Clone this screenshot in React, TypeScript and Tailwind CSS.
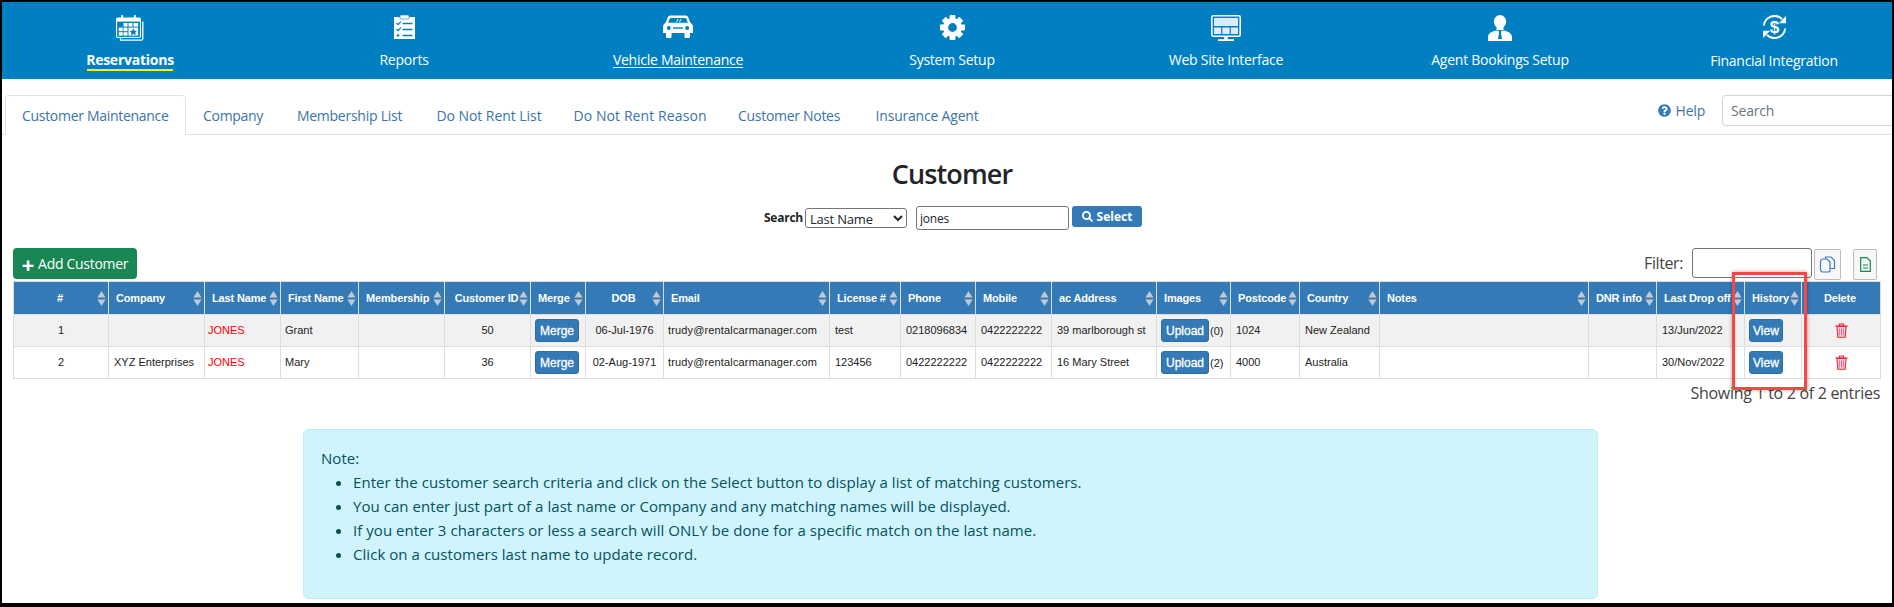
import React from "react";
import { FaSearch, FaQuestionCircle } from "react-icons/fa";

const BLUE = "#0080c3";

function CalendarIcon() {
  return (
    <svg width="28" height="26" viewBox="0 0 28 26">
      <path d="M26.8 6.5V23.5a1.6 1.6 0 0 1-1.6 1.6H4.5V23" fill="none" stroke="#fff" strokeWidth="1.3" />
      <rect x="0" y="2.5" width="25" height="20.5" rx="1.8" fill="#fff" />
      <rect x="1.1" y="6.6" width="22.8" height="15.3" fill={BLUE} />
      <g fill="#fff">
        <rect x="7.5" y="8" width="4" height="3.6" />
        <rect x="12.5" y="8" width="4" height="3.6" />
        <rect x="17.5" y="8" width="4.6" height="3.6" />
        <rect x="2.7" y="12.6" width="4" height="3.6" />
        <rect x="7.5" y="12.6" width="4" height="3.6" />
        <rect x="2.7" y="17.2" width="4" height="3.4" />
        <rect x="7.5" y="17.2" width="4" height="3.4" />
        <rect x="12.5" y="12.6" width="9.6" height="8" />
        <rect x="5" y="0" width="2.2" height="5" rx="1" />
        <rect x="17.8" y="0" width="2.2" height="5" rx="1" />
      </g>
      <path d="M17.3 13.3l1.2 2.4 2.5.3-1.8 1.8.4 2.5-2.3-1.2-2.3 1.2.4-2.5-1.8-1.8 2.5-.3z" fill={BLUE} />
    </svg>
  );
}

function ClipboardIcon() {
  return (
    <svg width="21" height="24" viewBox="0 0 21 24">
      <rect x="0" y="2" width="21" height="22" fill="#fff" />
      <rect x="6" y="0" width="9" height="4" rx="1" fill="#fff" stroke={BLUE} strokeWidth="0.6" />
      <g fill="none" stroke={BLUE} strokeWidth="1.3">
        <path d="M2.5 8l1.6 1.6 2.8-3" />
        <path d="M2.5 14l1.6 1.6 2.8-3" />
        <path d="M8.5 8.5H18.5M8.5 14.5H18.5M8.5 20.5H18.5" />
      </g>
      <circle cx="4" cy="20.5" r="1.3" fill={BLUE} />
    </svg>
  );
}

function CarIcon() {
  return (
    <svg width="30" height="23" viewBox="0 0 30 23">
      <path d="M7.5 0.5H22.5C24 .5 24.8 1.2 25.4 2.7L27.2 7.5C29 8.6 30 10 30 12V18H27V22a1 1 0 0 1-1 1H22.5a1 1 0 0 1-1-1V18H8.5V22a1 1 0 0 1-1 1H4a1 1 0 0 1-1-1V18H0V12C0 10 1 8.6 2.8 7.5L4.6 2.7C5.2 1.2 6 .5 7.5 .5Z" fill="#fff" />
      <path d="M8 3H22C22.8 3 23.2 3.4 23.5 4.1L24.8 7.8H5.2L6.5 4.1C6.8 3.4 7.2 3 8 3Z" fill={BLUE} />
      <path d="M13.5 6.8L15.2 4M16.5 6.8L18.2 4" stroke="#fff" strokeWidth="1" />
      <circle cx="5.8" cy="13" r="2" fill={BLUE} />
      <circle cx="24.2" cy="13" r="2" fill={BLUE} />
      <rect x="10" y="12.3" width="10" height="1.4" fill={BLUE} />
    </svg>
  );
}

function GearIcon() {
  const teeth = [0, 45, 90, 135, 180, 225, 270, 315];
  return (
    <svg width="25" height="25" viewBox="0 0 25 25">
      {teeth.map((a) => (
        <rect key={a} x="9.6" y="0" width="5.8" height="6" rx="0.8" fill="#fff" transform={`rotate(${a} 12.5 12.5)`} />
      ))}
      <circle cx="12.5" cy="12.5" r="6.9" fill="none" stroke="#fff" strokeWidth="5" />
    </svg>
  );
}

function MonitorIcon() {
  return (
    <svg width="30" height="26" viewBox="0 0 30 26">
      <rect x="0.8" y="0.8" width="28.4" height="20.4" rx="1.5" fill="none" stroke="#fff" strokeWidth="1.6" />
      <g fill="#dcecf6">
        <rect x="3" y="3" width="24" height="8" />
        <rect x="3" y="12.5" width="7.2" height="6.5" />
        <rect x="11.4" y="12.5" width="7.2" height="6.5" />
        <rect x="19.8" y="12.5" width="7.2" height="6.5" />
      </g>
      <rect x="13.2" y="21.5" width="3.6" height="3" fill="#fff" />
      <rect x="7" y="24.2" width="16" height="1.8" fill="#fff" />
    </svg>
  );
}

function AgentIcon() {
  return (
    <svg width="24" height="26" viewBox="0 0 24 26">
      <ellipse cx="12" cy="6.6" rx="6.2" ry="6.6" fill="#fff" />
      <path d="M8.5 11.5H15.5V15H8.5Z" fill="#fff" />
      <path d="M0 26V22C0 18.5 3.5 16.5 8 15.5L12 16L16 15.5C20.5 16.5 24 18.5 24 22V26Z" fill="#fff" />
      <path d="M10.6 15.8H13.4L13 18L14 24H10L11 18Z" fill={BLUE} />
    </svg>
  );
}

function DollarIcon() {
  return (
    <svg width="25" height="24" viewBox="0 0 25 24">
      <g fill="none" stroke="#fff" strokeWidth="2">
        <path d="M1.8 10.5A10.8 10.8 0 0 1 20 4" />
        <path d="M23.2 13.5A10.8 10.8 0 0 1 5 20" />
      </g>
      <path d="M24 1V8.2H16.8Z" fill="#fff" />
      <path d="M1 23V15.8H8.2Z" fill="#fff" />
      <text x="12.5" y="18.2" textAnchor="middle" fill="#fff" fontSize="17" fontWeight="700" fontFamily="'Liberation Sans', sans-serif">$</text>
    </svg>
  );
}

function SortArrows() {
  return (
    <svg width="9" height="15" viewBox="0 0 9 15" className="shrink-0">
      <path d="M4.5 0L8.6 6.6H0.4Z" fill="#c3c9d1" />
      <path d="M0.4 8.4H8.6L4.5 15Z" fill="#c3c9d1" />
    </svg>
  );
}

function Trash() {
  return (
    <svg width="13" height="15" viewBox="0 0 13 15" className="mx-auto">
      <path d="M2 3.5H11L10.2 14.2H2.8Z" fill="#ffd6e0" stroke="#f22" strokeWidth="1.1" />
      <path d="M0.5 3H12.5" stroke="#f22" strokeWidth="1.2" />
      <path d="M4.5 3V1H8.5V3" fill="none" stroke="#f22" strokeWidth="1.1" />
      <path d="M4.6 5.5V12.5M6.5 5.5V12.5M8.4 5.5V12.5" stroke="#f0508c" strokeWidth="0.9" />
    </svg>
  );
}

const navItems = [
  { label: "Reservations", icon: <CalendarIcon />, cls: "font-bold" },
  { label: "Reports", icon: <ClipboardIcon />, cls: "" },
  { label: "Vehicle Maintenance", icon: <CarIcon />, cls: "underline underline-offset-2" },
  { label: "System Setup", icon: <GearIcon />, cls: "" },
  { label: "Web Site Interface", icon: <MonitorIcon />, cls: "" },
  { label: "Agent Bookings Setup", icon: <AgentIcon />, cls: "" },
  { label: "Financial Integration", icon: <DollarIcon />, cls: "translate-y-px" },
];

const tabs = [
  { t: "Company", c: "w-[95px] tracking-[-0.3px]" },
  { t: "Membership List", c: "w-[138px] tracking-[-0.25px]" },
  { t: "Do Not Rent List", c: "w-[141px] tracking-[-0.05px]" },
  { t: "Do Not Rent Reason", c: "w-[161px] tracking-[0.1px]" },
  { t: "Customer Notes", c: "w-[137px] tracking-[-0.3px]" },
  { t: "Insurance Agent", c: "w-[139px] tracking-[-0.2px]" },
];

const columns = [
  { label: "#", w: "w-[95px]", center: true, sort: true },
  { label: "Company", w: "w-[96px]", center: false, sort: true },
  { label: "Last Name", w: "w-[76px]", center: false, sort: true },
  { label: "First Name", w: "w-[78px]", center: false, sort: true },
  { label: "Membership", w: "w-[86px]", center: false, sort: true },
  { label: "Customer ID", w: "w-[86px]", center: true, sort: true },
  { label: "Merge", w: "w-[55px]", center: false, sort: true },
  { label: "DOB", w: "w-[78px]", center: true, sort: true },
  { label: "Email", w: "w-[166px]", center: false, sort: true },
  { label: "License #", w: "w-[71px]", center: false, sort: true },
  { label: "Phone", w: "w-[75px]", center: false, sort: true },
  { label: "Mobile", w: "w-[76px]", center: false, sort: true },
  { label: "ac Address", w: "w-[105px]", center: false, sort: true },
  { label: "Images", w: "w-[74px]", center: false, sort: true },
  { label: "Postcode", w: "w-[69px]", center: false, sort: true },
  { label: "Country", w: "w-[80px]", center: false, sort: true },
  { label: "Notes", w: "w-[209px]", center: false, sort: true },
  { label: "DNR info", w: "w-[68px]", center: false, sort: true },
  { label: "Last Drop off", w: "w-[88px]", center: false, sort: true },
  { label: "History", w: "w-[57px]", center: false, sort: true },
  { label: "Delete", w: "w-[79px]", center: true, sort: false },
];

const rows = [
  { n: "1", company: "", last: "JONES", first: "Grant", id: "50", dob: "06-Jul-1976", lic: "test", phone: "0218096834", mobile: "0422222222", addr: "39 marlborough st", img: "(0)", post: "1024", country: "New Zealand", drop: "13/Jun/2022", bg: "bg-[#f1f1f1]" },
  { n: "2", company: "XYZ Enterprises", last: "JONES", first: "Mary", id: "36", dob: "02-Aug-1971", lic: "123456", phone: "0422222222", mobile: "0422222222", addr: "16 Mary Street", img: "(2)", post: "4000", country: "Australia", drop: "30/Nov/2022", bg: "bg-white" },
];

function TableButton({ children, pad }: { children: React.ReactNode; pad: string }) {
  return (
    <button className={`h-[23px] ${pad} rounded-[3px] bg-[#337ab7] border border-[#2e6da4] text-white text-[12px] font-normal leading-none [-webkit-text-stroke:0.3px_white]`}>
      {children}
    </button>
  );
}

const td = "border border-[#dddddd] px-[5px] truncate";
const tdc = "border border-[#dddddd] px-[5px] text-center";

export default function App() {
  return (
    <div className="relative box-border w-[1894px] h-[607px] overflow-hidden bg-white border-2 border-b-4 border-black font-['Open_Sans','Liberation_Sans',sans-serif] text-[#212529]">
      <nav className="h-[77px] bg-[#0080c3] overflow-hidden">
        <div className="flex w-[1918px] -ml-[9px] h-full">
          {navItems.map((n) => (
            <div key={n.label} className="w-[274px] flex flex-col items-center">
              <div className="h-[43px] pt-[13px] flex items-start justify-center">{n.icon}</div>
              <div className="mt-[5px] flex flex-col items-center">
                <span className={`text-[14px] tracking-[-0.25px] leading-[20px] text-white ${n.cls}`}>{n.label}</span>
                {n.label === "Reservations" && <span className="block w-[86px] h-[2px] bg-[#f5f500] mt-[-1px]" />}
              </div>
            </div>
          ))}
        </div>
      </nav>

      <div className="mt-4 h-[40px] border-b border-[#dee2e6] flex pl-[3px] overflow-visible">
        <div className="h-[40px] px-4 border border-[#dee2e6] border-b-white rounded-t-[4px] flex items-center text-[14px] tracking-[-0.3px] text-[#3b74a8] bg-white">
          Customer Maintenance
        </div>
        {tabs.map((t) => (
          <div key={t.t} className={`h-[40px] flex items-center justify-center text-[14px] text-[#3b74a8] ${t.c}`}>
            {t.t}
          </div>
        ))}
        <div className="ml-auto -mr-[9px] flex items-start">
          <div className="h-[31px] flex items-center gap-[5px] text-[14px] tracking-[-0.2px] text-[#3b74a8] mr-[17px]">
            <FaQuestionCircle size={13} color="#337ab7" />
            <span>Help</span>
          </div>
          <input
            placeholder="Search"
            className="w-[179px] h-[31px] border border-[#ced4da] rounded-[4px] px-[8px] text-[14px] tracking-[-0.2px] placeholder:text-[#6c757d]"
          />
        </div>
      </div>

      <h1 className="mt-[22px] h-[34px] pl-[10px] text-center text-[27px] leading-[34px] font-semibold tracking-[-0.9px]">Customer</h1>

      <div className="mt-[15px] h-[24px] pl-[12px] flex justify-center items-start">
        <label className="w-[41px] h-[24px] flex items-center text-[12px] font-bold tracking-[-0.25px]">Search</label>
        <select defaultValue="Last Name" className="w-[102px] h-[20px] mt-[2px] border border-[#767676] rounded-[3px] text-[13px] tracking-[-0.2px] bg-white">
          <option>Last Name</option>
        </select>
        <input defaultValue="jones" className="ml-[9px] w-[153px] h-[24px] border border-[#767676] rounded-[3px] px-[3px] text-[12px] tracking-[-0.2px]" />
        <button className="ml-[3px] w-[70px] h-[21px] rounded-[3px] bg-[#337ab7] text-white text-[12px] font-bold flex items-center justify-center gap-[4px]">
          <FaSearch size={11} />
          Select
        </button>
      </div>

      <div className="mt-[18px] h-[33px] pl-[11px] pr-[15px] flex items-start">
        <button className="w-[124px] h-[31px] rounded-[4px] bg-[#198754] text-white text-[14px] tracking-[-0.3px] flex items-center justify-center gap-[4px]">
          <span className="text-[22px] leading-none font-bold">+</span>
          Add Customer
        </button>
        <span className="ml-auto h-[30px] flex items-center text-[16px] tracking-[-0.4px] text-[#444]">Filter:</span>
        <input className="ml-[9px] w-[120px] h-[30px] border border-[#767676] rounded-[3px]" />
        <button className="ml-[2px] mt-px w-[27px] h-[31px] border border-[#bdbdbd] rounded-[2px] bg-[#f7f7f7] flex items-center justify-center">
          <svg width="17" height="17" viewBox="0 0 17 17" fill="none" stroke="#3d7cc9" strokeWidth="1.2">
            <path d="M6.5 3V1H12L15.5 4.5V12.5H11" />
            <path d="M1.5 5.5C1.5 4 2.5 3 4 3H8L11 6V14C11 15.2 10.2 16 9 16H4C2.5 16 1.5 15 1.5 13.5Z" />
          </svg>
        </button>
        <button className="ml-[12px] mt-px w-[24px] h-[31px] border border-[#bdbdbd] rounded-[2px] bg-[#f7f7f7] flex items-center justify-center">
          <svg width="11" height="15" viewBox="0 0 11 15" fill="none" stroke="#198754" strokeWidth="1.2">
            <path d="M.7.7H7L10.3 4V14.3H.7Z" />
            <path d="M3 8H8M3 11H8" />
          </svg>
        </button>
      </div>

      <div className="pl-[11px]">
        <table className="table-fixed w-[1867px] border-collapse font-['Liberation_Sans',Arial,sans-serif] text-[11px] text-[#222]">
          <thead>
            <tr className="h-[33px] bg-[#337ab7] text-white">
              {columns.map((c) => (
                <th key={c.label} className={`${c.w} border border-[#dddddd] font-bold p-0`}>
                  <div className="flex items-center pr-[2px] tracking-[-0.15px]">
                    <span className={c.center ? (c.sort ? "flex-1 text-center pl-[9px] whitespace-nowrap" : "flex-1 text-center whitespace-nowrap") : "flex-1 text-left pl-[7px] whitespace-nowrap overflow-hidden"}>
                      {c.label}
                    </span>
                    {c.sort && <SortArrows />}
                  </div>
                </th>
              ))}
            </tr>
          </thead>
          <tbody>
            {rows.map((r) => (
              <tr key={r.n} className={`h-[32px] ${r.bg}`}>
                <td className={tdc}>{r.n}</td>
                <td className={td}>{r.company}</td>
                <td className="border border-[#dddddd] pl-[3px] text-[#ff0000]">{r.last}</td>
                <td className="border border-[#dddddd] pl-[4px]">{r.first}</td>
                <td className={td}></td>
                <td className={tdc}>{r.id}</td>
                <td className="border border-[#dddddd] pl-[4px]"><TableButton pad="px-[4px]">Merge</TableButton></td>
                <td className={`${tdc} whitespace-nowrap`}>{r.dob}</td>
                <td className="border border-[#dddddd] pl-[4px] tracking-[0.15px] whitespace-nowrap">trudy@rentalcarmanager.com</td>
                <td className={td}>{r.lic}</td>
                <td className={td}>{r.phone}</td>
                <td className={td}>{r.mobile}</td>
                <td className={td}>{r.addr}</td>
                <td className="border border-[#dddddd] pl-[4px] whitespace-nowrap"><TableButton pad="px-[4px]">Upload</TableButton><span className="ml-px">{r.img}</span></td>
                <td className={td}>{r.post}</td>
                <td className={td}>{r.country}</td>
                <td className={td}></td>
                <td className={td}></td>
                <td className={td}>{r.drop}</td>
                <td className="border border-[#dddddd] pl-[4px]"><TableButton pad="px-[3px]">View</TableButton></td>
                <td className={tdc}><Trash /></td>
              </tr>
            ))}
          </tbody>
        </table>
      </div>

      <div className="mt-[2px] pr-[12px] text-right text-[16px] leading-[24px] tracking-[-0.3px] text-[#444]">
        Showing 1 to 2 of 2 entries
      </div>

      <div className="mt-[24px] ml-[301px] w-[1295px] h-[170px] box-border border border-[#b6effb] rounded-[6px] bg-[#cff4fc] text-[#055160] pt-[16px] px-[17px] text-[15px] tracking-[0.05px] leading-[24px]">
        <div>Note:</div>
        <ul className="list-disc pl-[32px]">
          <li>Enter the customer search criteria and click on the Select button to display a list of matching customers.</li>
          <li>You can enter just part of a last name or Company and any matching names will be displayed.</li>
          <li>If you enter 3 characters or less a search will ONLY be done for a specific match on the last name.</li>
          <li>Click on a customers last name to update record.</li>
        </ul>
      </div>

      <div className="absolute left-[1730px] top-[270px] w-[75px] h-[118px] border-[3px] border-[#fd4545] shadow-[0_0_4px_rgba(0,0,0,0.35)] pointer-events-none" />
    </div>
  );
}
